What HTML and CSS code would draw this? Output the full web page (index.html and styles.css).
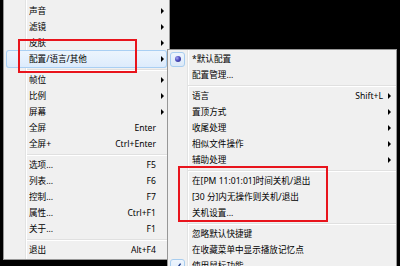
FILE: index.html
```html
<!DOCTYPE html>
<html lang="zh-CN">
<head>
<meta charset="utf-8">
<title>菜单</title>
<link rel="stylesheet" href="styles.css">
</head>
<body>
<div class="desk">
  <div class="menu menu-main">
    <div class="item"><span class="ico"></span><span class="label">声音</span><span class="key"></span><span class="arrow"></span></div>
    <div class="item"><span class="ico"></span><span class="label">滤镜</span><span class="key"></span><span class="arrow"></span></div>
    <div class="item"><span class="ico"></span><span class="label">皮肤</span><span class="key"></span><span class="arrow"></span></div>
    <div class="item hot"><span class="ico"></span><span class="label">配置/语言/其他</span><span class="key"></span><span class="arrow"></span></div>
    <div class="sep"></div>
    <div class="item"><span class="ico"></span><span class="label">帧位</span><span class="key"></span><span class="arrow"></span></div>
    <div class="item"><span class="ico"></span><span class="label">比例</span><span class="key"></span><span class="arrow"></span></div>
    <div class="item"><span class="ico"></span><span class="label">屏幕</span><span class="key"></span><span class="arrow"></span></div>
    <div class="item"><span class="ico"></span><span class="label">全屏</span><span class="key">Enter</span><span class="noarrow"></span></div>
    <div class="item"><span class="ico"></span><span class="label">全屏+</span><span class="key">Ctrl+Enter</span><span class="noarrow"></span></div>
    <div class="sep"></div>
    <div class="item"><span class="ico"></span><span class="label">选项...</span><span class="key">F5</span><span class="noarrow"></span></div>
    <div class="item"><span class="ico"></span><span class="label">列表...</span><span class="key">F6</span><span class="noarrow"></span></div>
    <div class="item"><span class="ico"></span><span class="label">控制...</span><span class="key">F7</span><span class="noarrow"></span></div>
    <div class="item"><span class="ico"></span><span class="label">属性...</span><span class="key">Ctrl+F1</span><span class="noarrow"></span></div>
    <div class="item"><span class="ico"></span><span class="label">关于...</span><span class="key">F1</span><span class="noarrow"></span></div>
    <div class="sep"></div>
    <div class="item"><span class="ico"></span><span class="label">退出</span><span class="key">Alt+F4</span><span class="noarrow"></span></div>
  </div>

  <div class="menu menu-sub">
    <div class="item"><span class="ico"><span class="mark-box"><span class="radio"></span></span></span><span class="label">*默认配置</span><span class="key"></span><span class="noarrow"></span></div>
    <div class="item"><span class="ico"></span><span class="label">配置管理...</span><span class="key"></span><span class="noarrow"></span></div>
    <div class="sep"></div>
    <div class="item"><span class="ico"></span><span class="label">语言</span><span class="key">Shift+L</span><span class="arrow"></span></div>
    <div class="item"><span class="ico"></span><span class="label">置顶方式</span><span class="key"></span><span class="arrow"></span></div>
    <div class="item"><span class="ico"></span><span class="label">收尾处理</span><span class="key"></span><span class="arrow"></span></div>
    <div class="item"><span class="ico"></span><span class="label">相似文件操作</span><span class="key"></span><span class="arrow"></span></div>
    <div class="item"><span class="ico"></span><span class="label">辅助处理</span><span class="key"></span><span class="arrow"></span></div>
    <div class="sep"></div>
    <div class="item"><span class="ico"></span><span class="label">在[PM 11:01:01]时间关机/退出</span><span class="key"></span><span class="noarrow"></span></div>
    <div class="item"><span class="ico"></span><span class="label">[30 分]内无操作则关机/退出</span><span class="key"></span><span class="noarrow"></span></div>
    <div class="item"><span class="ico"></span><span class="label">关机设置...</span><span class="key"></span><span class="noarrow"></span></div>
    <div class="sep"></div>
    <div class="item"><span class="ico"></span><span class="label">忽略默认快捷键</span><span class="key"></span><span class="noarrow"></span></div>
    <div class="item"><span class="ico"></span><span class="label">在收藏菜单中显示播放记忆点</span><span class="key"></span><span class="noarrow"></span></div>
    <div class="item"><span class="ico"><span class="mark-box"><svg class="check" width="9" height="9" viewBox="0 0 9 9"><path d="M1.5 4.8 L3.6 7 L7.6 1.6" fill="none" stroke="#1e3a8a" stroke-width="1.4"/></svg></span></span><span class="label">使用鼠标功能</span><span class="key"></span><span class="noarrow"></span></div>
  </div>

  <div class="redbox redbox-1"></div>
  <div class="redbox redbox-2"></div>
</div>
</body>
</html>
```

FILE: styles.css
```css
html, body {
  margin: 0;
  padding: 0;
  background: #000;
  overflow: hidden;
}

.desk {
  position: relative;
  width: 400px;
  height: 266px;
  overflow: hidden;
  background: #000;
}

.menu {
  position: absolute;
  box-sizing: border-box;
  border: 1px solid #979797;
  color: #000;
  font-family: "Noto Sans", "Noto Sans CJK SC", sans-serif;
  font-size: 8.6px;
  line-height: 16px;
}

.menu-main {
  left: 3px;
  top: 0;
  width: 167px;
  border-top: 0;
  padding: 3px 0 1px;
  background:
    linear-gradient(to right, transparent 21px, #e2e3e3 21px, #e2e3e3 22px, #ffffff 22px, #ffffff 23px, transparent 23px),
    #f0f0f0;
}

.menu-sub {
  left: 167px;
  top: 49px;
  width: 230px;
  height: 240px;
  padding: 1px 0;
  background:
    linear-gradient(to right, transparent 19px, #e2e3e3 19px, #e2e3e3 20px, #ffffff 20px, #ffffff 21px, transparent 21px),
    #f0f0f0;
}

.item {
  display: grid;
  grid-template-columns: 23px 1fr auto 9px;
  align-items: center;
  height: 16px;
  margin: 0 2px;
  white-space: nowrap;
}

.menu-sub .item {
  grid-template-columns: 22px 1fr auto 9px;
}

.item.hot {
  height: 18px;
  margin: -1px 2px;
  border-radius: 3px;
  background: linear-gradient(#edf5fd, #dcebfc);
  box-shadow: inset 0 0 0 1px #a9cff3;
}

.ico {
  display: flex;
  align-items: center;
  height: 16px;
}

.label {
  overflow: hidden;
}

.key {
  padding-right: 2px;
  text-align: right;
}

.arrow {
  display: flex;
  align-items: center;
  height: 16px;
}

.arrow::before {
  content: "";
  display: block;
  margin-left: 3px;
  border-left: 3px solid #000;
  border-top: 3px solid transparent;
  border-bottom: 3px solid transparent;
}

.sep {
  height: 5px;
  margin-left: 23px;
  background: linear-gradient(transparent 2px, #e0e0e0 2px, #e0e0e0 3px, #ffffff 3px, #ffffff 4px, transparent 4px);
}

.menu-sub .sep {
  margin-left: 20px;
}

.mark-box {
  box-sizing: border-box;
  width: 15px;
  height: 15px;
  border: 1px solid #a8cdef;
  border-radius: 3px;
  background: linear-gradient(#eef5fd, #dce9f8);
  display: flex;
  align-items: center;
  justify-content: center;
}

.radio {
  width: 6px;
  height: 6px;
  border-radius: 50%;
  background: radial-gradient(circle at 35% 35%, #a9a9f5 0, #5050c0 45%, #26267e 100%);
}

.redbox {
  position: absolute;
  box-sizing: border-box;
  border: 2px solid #e8141c;
}

.redbox-1 {
  left: 18px;
  top: 39px;
  width: 119px;
  height: 34px;
}

.redbox-2 {
  left: 178px;
  top: 166px;
  width: 150px;
  height: 56px;
}
```
